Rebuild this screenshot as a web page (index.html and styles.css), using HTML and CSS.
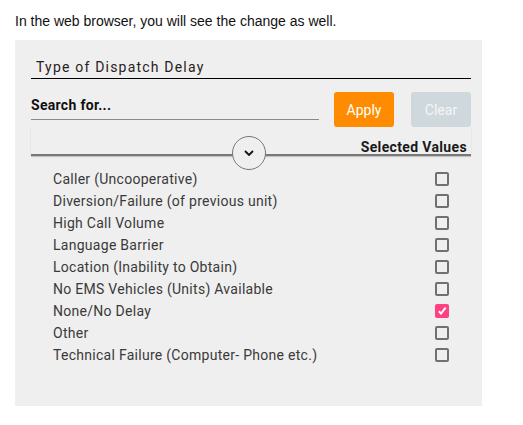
FILE: index.html
```html
<!DOCTYPE html>
<html>
<head>
<meta charset="utf-8">
<link rel="stylesheet" href="styles.css">
</head>
<body>
<p class="intro">In the web browser, you will see the change as well.</p>
<div class="panel">
  <div class="field-title">Type of Dispatch Delay</div>
  <div class="search-row">
    <div class="search">Search for...</div>
    <button class="btn apply">Apply</button>
    <button class="btn clear">Clear</button>
  </div>
  <div class="divider">
    <span class="sel">Selected Values</span>
    <span class="toggle">
      <svg width="10" height="6" viewBox="0 0 10 6"><path d="M1 1 L5 5 L9 1" fill="none" stroke="#111" stroke-width="1.8"/></svg>
    </span>
  </div>
  <ul class="list">
    <li><span>Caller (Uncooperative)</span><span class="cb"></span></li>
    <li><span>Diversion/Failure (of previous unit)</span><span class="cb"></span></li>
    <li><span>High Call Volume</span><span class="cb"></span></li>
    <li><span>Language Barrier</span><span class="cb"></span></li>
    <li><span>Location (Inability to Obtain)</span><span class="cb"></span></li>
    <li><span>No EMS Vehicles (Units) Available</span><span class="cb"></span></li>
    <li><span>None/No Delay</span><span class="cb checked"><svg width="14" height="14" viewBox="0 0 14 14"><path d="M4.5 8 L6 9.5 L10 4.5" fill="none" stroke="#fff" stroke-width="2" stroke-linecap="square"/></svg></span></li>
    <li><span>Other</span><span class="cb"></span></li>
    <li><span>Technical Failure (Computer- Phone etc.)</span><span class="cb"></span></li>
  </ul>
</div>
</body>
</html>
```
FILE: styles.css
```css
html, body { margin: 0; padding: 0; background: #fff; }
body { padding: 0 0 0 15px; font-family: Roboto, "Liberation Sans", sans-serif; }
.intro {
  margin: 0; padding-top: 13px; height: 27px;
  font-family: "Liberation Sans", Arial, sans-serif; font-size: 14px; line-height: 16px; color: #111;
}
.panel {
  width: 467px; height: 366px; box-sizing: border-box;
  background: #efefef; padding: 16px 11px 0 16px;
}
.field-title {
  height: 22px; line-height: 22px; padding-left: 5px;
  font-size: 14px; letter-spacing: 1.2px; color: #2a2020;
  border-bottom: 1px solid #000;
}
.search-row { display: flex; align-items: flex-start; margin-top: 13px; }
.search {
  width: 288px; height: 27px; line-height: 27px;
  border-bottom: 1px solid #8a8a8a;
  font-size: 14px; letter-spacing: 0.3px; font-weight: 700; color: #111;
  margin-right: 15px;
}
.btn {
  width: 60px; height: 35px; border: 0; border-radius: 3px;
  font-family: Roboto, "Liberation Sans", sans-serif; font-size: 14px; color: #fff; padding: 0;
}
.apply { background: #ff8c00; margin-right: 17px; }
.clear { background: #cfd8dc; color: #f4f6f7; }
.divider {
  position: relative; height: 27px; margin-top: 0;
  display: flex; justify-content: flex-end; align-items: flex-end;
  border-bottom: 2px solid #777; box-shadow: 0 1px 1px #c4c4c4;
}
.sel { font-size: 14px; letter-spacing: 0.35px; font-weight: 700; color: #1a1a1a; line-height: 16px; padding-right: 4px; margin-bottom: -1px; }
.toggle {
  position: absolute; left: 201px; top: 9px;
  width: 34px; height: 34px; box-sizing: border-box;
  border: 1.5px solid #777; border-radius: 50%; background: #efefef;
  display: flex; align-items: center; justify-content: center;
}
.list { list-style: none; margin: 12px 0 0; padding: 0 22px 0 22px; }
.list li {
  display: flex; justify-content: space-between; align-items: center;
  height: 22px; font-size: 14px; letter-spacing: 0.28px; color: #3a3a3a;
}
.cb {
  width: 14px; height: 14px; box-sizing: border-box;
  border: 2px solid #707070; border-radius: 2px;
}
.cb.checked { border: 0; background: #ff4081; }
.cb svg { display: block; }
```
